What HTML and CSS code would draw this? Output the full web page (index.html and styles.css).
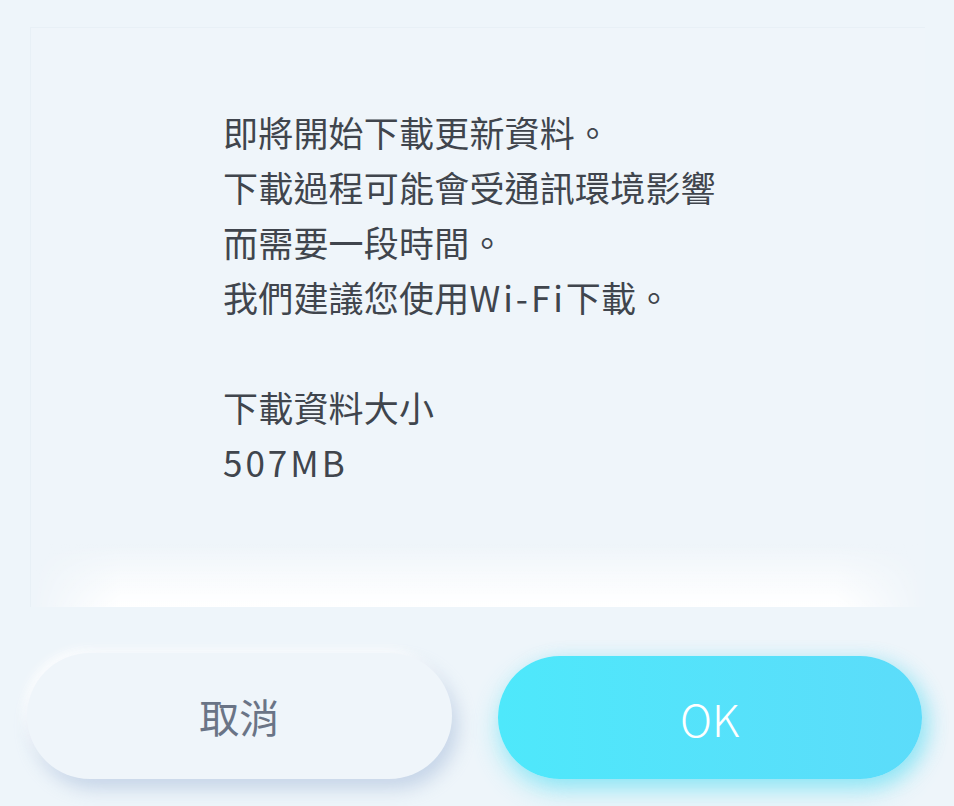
FILE: index.html
```html
<!DOCTYPE html>
<html lang="zh-Hant">
<head>
  <meta charset="UTF-8">
  <title>下載更新資料</title>
  <link rel="stylesheet" href="styles.css">
</head>
<body>

  <div class="dialog">
    <!-- 訊息區 -->
    <div class="panel">
      <div class="message">
        <p>即將開始下載更新資料。</p>
        <p>下載過程可能會受通訊環境影響</p>
        <p>而需要一段時間。</p>
        <p>我們建議您使用<span class="latin">Wi-Fi</span>下載。</p>
        <p class="blank">&nbsp;</p>
        <p>下載資料大小</p>
        <p><span class="latin">507MB</span></p>
      </div>
    </div>

    <!-- 按鈕 -->
    <div class="actions">
      <button type="button" class="btn btn-cancel">取消</button>
      <button type="button" class="btn btn-ok">OK</button>
    </div>
  </div>

</body>
</html>
```

FILE: styles.css
```css
* { box-sizing: border-box; margin: 0; padding: 0; font-family: "Noto Sans CJK TC", "Noto Sans", sans-serif; }
html, body { height: 100%; }
body { background: #eef5fa; overflow: hidden; }

.dialog { display: flex; flex-direction: column; height: 100%; }

/* Panel */
.panel {
  position: relative;
  margin: 27px 29px 0 30px; height: 580px;
  border-top: 1px solid #e8f0f6; border-left: 1px solid #e8f0f6;
  background: #eff5fa;
  padding: 76px 0 0 192px;
}
/* white glow at the bottom edge */
.panel::after {
  content: ""; position: absolute; left: 0; right: 0; bottom: 0; height: 64px;
  background: linear-gradient(to bottom, rgba(255,255,255,0) 0%, rgba(255,255,255,0.6) 55%, #fff 100%);
  -webkit-mask-image: linear-gradient(to right, transparent 0%, #000 10%, #000 90%, transparent 100%);
  mask-image: linear-gradient(to right, transparent 0%, #000 10%, #000 90%, transparent 100%);
}
.message { color: #40454d; font-size: 35px; line-height: 55px; letter-spacing: 0.2px; }
.message p { white-space: nowrap; }
.message .latin { letter-spacing: 3px; }

/* Buttons */
.actions {
  display: grid; grid-template-columns: 1fr 1fr; gap: 46px;
  padding: 46px 32px 0 27px;
}
.btn {
  height: 126px; border: none; border-radius: 63px; cursor: pointer;
  font-family: "Noto Sans CJK TC", "Noto Sans", sans-serif;
}
.btn-cancel {
  background: #eff5fa; color: #6a7486; font-size: 40px;
  box-shadow: 6px 10px 18px rgba(150, 175, 210, 0.45), -4px -4px 10px rgba(255, 255, 255, 0.9);
}
.btn-ok {
  background: linear-gradient(to right, #4ee8fb, #5cdcfa);
  color: #fff; font-size: 44px; font-weight: 300; margin-top: 3px; height: 123px;
  box-shadow: 0 12px 26px rgba(80, 225, 245, 0.45), 8px 4px 18px rgba(90, 215, 240, 0.35);
}
```
